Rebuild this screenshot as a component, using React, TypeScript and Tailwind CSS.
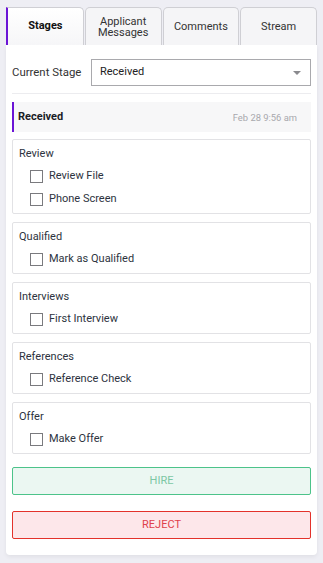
const tabs = ['Stages', 'Applicant Messages', 'Comments', 'Stream'];

const sections = [
  { title: 'Review', items: ['Review File', 'Phone Screen'] },
  { title: 'Qualified', items: ['Mark as Qualified'] },
  { title: 'Interviews', items: ['First Interview'] },
  { title: 'References', items: ['Reference Check'] },
  { title: 'Offer', items: ['Make Offer'] },
];

export default function App() {
  return (
    <div className="min-h-[563px] bg-[#eeeef4] px-[6px] pt-[7px] font-['Roboto',sans-serif] text-[#2d3340]">
      {/* Tabs */}
      <div className="flex h-[38px] gap-px">
        {tabs.map((t, i) => (
          <div
            key={t}
            className={
              i === 0
                ? 'flex flex-1 items-center justify-center rounded-tr-[5px] border-l-2 border-t border-r border-l-[#6b14d6] border-t-[#cfcfd4] border-r-[#cfcfd4] bg-gradient-to-b from-white to-[#f6f6f8] text-[11px] font-bold text-[#111]'
                : 'flex flex-1 items-center justify-center rounded-t-[5px] border border-b-0 border-[#cfcfd4] bg-[#f5f5f7] text-center text-[11px] leading-[11px] text-[#333]'
            }
          >
            {t === 'Applicant Messages' ? (
              <span>
                Applicant
                <br />
                Messages
              </span>
            ) : (
              t
            )}
          </div>
        ))}
      </div>

      {/* Card body */}
      <div className="rounded-b-[4px] bg-white px-[6px] pb-[16px] shadow-[0_2px_4px_rgba(0,0,0,0.06)]">
        <div className="flex items-center border-b border-[#ececef] pt-[14px] pb-[7px]">
          <span className="w-[79px] text-[11.4px] text-[#333]">Current Stage</span>
          <div className="flex h-[27px] flex-1 items-center justify-between border border-[#a9a9ad] pl-[8px] pr-[9px] text-[11px] text-[#222]">
            <span>Received</span>
            <span className="h-0 w-0 border-x-[4px] border-t-[4px] border-x-transparent border-t-[#8a8a8e]" />
          </div>
        </div>

        <div className="mt-[8px] flex h-[30px] items-center justify-between border-l-2 border-[#6b14d6] bg-[#f7f7f8] pl-[4px] pr-[14px]">
          <span className="text-[11px] font-bold text-[#1a1d26]">Received</span>
          <span className="pt-[3px] text-[9.4px] text-[#a8a8ad]">Feb 28 9:56 am</span>
        </div>

        <div className="mt-[7px] flex flex-col gap-[8px]">
          {sections.map((s) => (
            <div key={s.title} className="rounded-[2px] border border-[#e2e2e5] px-[6px] pt-[7px] pb-[2px]">
              <div className="h-[14px] text-[11px] leading-[14px] text-[#2d3340]">{s.title}</div>
              <div className="mt-[4px]">
                {s.items.map((it) => (
                  <label key={it} className="flex h-[23px] items-center gap-[6px] pl-[11px] text-[11px] text-[#2d3340]">
                    <span className="h-[13px] w-[13px] border border-[#7a7a7e] bg-white" />
                    {it}
                  </label>
                ))}
              </div>
            </div>
          ))}
        </div>

        <button className="mt-[13px] flex h-[28px] w-full items-center justify-center rounded-[2px] border border-[#4cc38a] bg-[#ebf7f2] text-[11px] text-[#7cc7a4]">
          HIRE
        </button>
        <button className="mt-[16px] flex h-[28px] w-full items-center justify-center rounded-[2px] border border-[#e3322b] bg-[#fde7ea] text-[11px] text-[#e0404a]">
          REJECT
        </button>
      </div>
    </div>
  );
}
